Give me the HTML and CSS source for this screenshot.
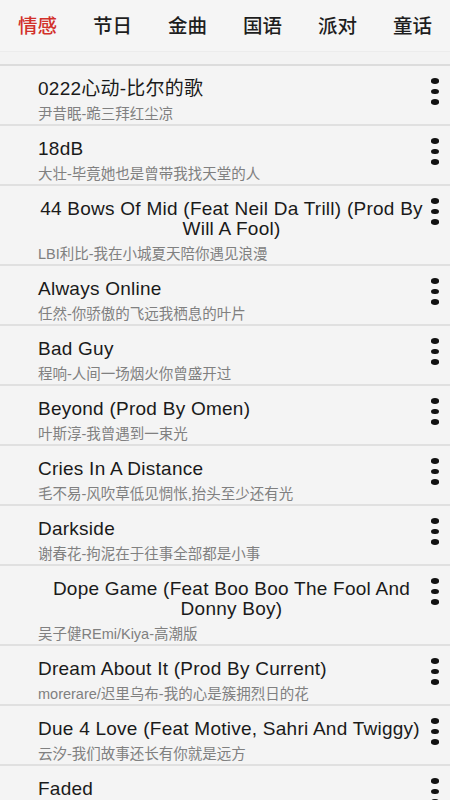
FILE: index.html
```html
<!DOCTYPE html>
<html lang="zh">
<head>
<meta charset="utf-8">
<link rel="stylesheet" href="styles.css">
</head>
<body>
<div class="tabs">
  <div class="tab active">情感</div>
  <div class="tab">节日</div>
  <div class="tab">金曲</div>
  <div class="tab">国语</div>
  <div class="tab">派对</div>
  <div class="tab">童话</div>
</div>
<div class="band"></div>
<ul class="list">
  <li class="row"><div class="info"><div class="title">0222心动-比尔的歌</div><div class="sub">尹昔眠-跪三拜红尘凉</div></div><div class="more"><i></i><i></i><i></i></div></li>
  <li class="row"><div class="info"><div class="title">18dB</div><div class="sub">大壮-毕竟她也是曾带我找天堂的人</div></div><div class="more"><i></i><i></i><i></i></div></li>
  <li class="row"><div class="info"><div class="title">44 Bows Of Mid (Feat Neil Da Trill) (Prod By Will A Fool)</div><div class="sub">LBI利比-我在小城夏天陪你遇见浪漫</div></div><div class="more"><i></i><i></i><i></i></div></li>
  <li class="row"><div class="info"><div class="title">Always Online</div><div class="sub">任然-你骄傲的飞远我栖息的叶片</div></div><div class="more"><i></i><i></i><i></i></div></li>
  <li class="row"><div class="info"><div class="title">Bad Guy</div><div class="sub">程响-人间一场烟火你曾盛开过</div></div><div class="more"><i></i><i></i><i></i></div></li>
  <li class="row"><div class="info"><div class="title">Beyond (Prod By Omen)</div><div class="sub">叶斯淳-我曾遇到一束光</div></div><div class="more"><i></i><i></i><i></i></div></li>
  <li class="row"><div class="info"><div class="title">Cries In A Distance</div><div class="sub">毛不易-风吹草低见惆怅,抬头至少还有光</div></div><div class="more"><i></i><i></i><i></i></div></li>
  <li class="row"><div class="info"><div class="title">Darkside</div><div class="sub">谢春花-拘泥在于往事全部都是小事</div></div><div class="more"><i></i><i></i><i></i></div></li>
  <li class="row"><div class="info"><div class="title">Dope Game (Feat Boo Boo The Fool And Donny Boy)</div><div class="sub">吴子健REmi/Kiya-高潮版</div></div><div class="more"><i></i><i></i><i></i></div></li>
  <li class="row"><div class="info"><div class="title">Dream About It (Prod By Current)</div><div class="sub">morerare/迟里乌布-我的心是簇拥烈日的花</div></div><div class="more"><i></i><i></i><i></i></div></li>
  <li class="row"><div class="info"><div class="title">Due 4 Love (Feat Motive, Sahri And Twiggy)</div><div class="sub">云汐-我们故事还长有你就是远方</div></div><div class="more"><i></i><i></i><i></i></div></li>
  <li class="row"><div class="info"><div class="title">Faded</div><div class="sub">Alan Walker-Faded</div></div><div class="more"><i></i><i></i><i></i></div></li>
</ul>
</body>
</html>
```
FILE: styles.css
```css
html, body {
  margin: 0;
  padding: 0;
  background: #f4f4f4;
  font-family: "Liberation Sans", "Noto Sans CJK SC", sans-serif;
  height: 800px;
  overflow: hidden;
}
.tabs {
  display: flex;
  height: 51px;
  align-items: center;
  background: #f5f5f5;
  border-bottom: 1px solid #ececec;
}
.tab {
  flex: 1;
  text-align: center;
  font-size: 19.5px;
  font-weight: 500;
  color: #1e1e1e;
  font-family: "Noto Sans CJK SC", sans-serif;
  padding-bottom: 2px;
}
.tab.active {
  color: #d2302a;
}
.band {
  height: 12px;
  background: #f3f3f3;
  border-bottom: 2px solid #dcdcdc;
}
.list {
  list-style: none;
  margin: 0;
  padding: 0;
}
.row {
  display: flex;
  border-bottom: 2px solid #e0e0e0;
  background: #f4f4f4;
}
.info {
  flex: 1;
  padding: 13px 0 2px 38px;
  min-width: 0;
}
.title {
  display: inline-block;
  text-align: center;
  font-size: 19px;
  letter-spacing: 0.25px;
  line-height: 20px;
  color: #1a1a1a;
}
.sub {
  margin-top: 7px;
  font-size: 14.5px;
  line-height: 16px;
  color: #808080;
  white-space: nowrap;
}
.more {
  width: 20px;
  flex: none;
  display: flex;
  flex-direction: column;
  align-items: center;
  padding-top: 12px;
  gap: 5px;
  margin-right: 5px;
}
.more i {
  display: block;
  width: 8px;
  height: 5.5px;
  border-radius: 50%;
  background: #111;
}
```
